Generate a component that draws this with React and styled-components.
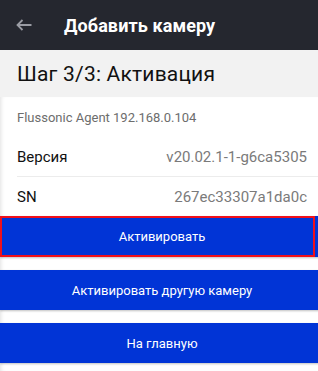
import React from 'react';
import styled, { createGlobalStyle } from 'styled-components';

const Global = createGlobalStyle`
    html, body {
        margin: 0;
        padding: 0;
        background: #ffffff;
        font-family: Roboto, "Noto Sans", Arial, sans-serif;
    }
    * { box-sizing: border-box; }
`
const Page = styled.div`
    width: 318px;
    height: 371px;
    overflow: hidden;
    display: flex;
    flex-direction: column;
    background: #fff;
`
const Header = styled.div`
    height: 50px;
    flex-shrink: 0;
    background: #25272f;
    display: flex;
    align-items: center;
    padding-left: 16px;
`
const BackButton = styled.svg`
    margin-right: 32px;
    flex-shrink: 0;
`
const Title = styled.div`
    color: #ffffff;
    font-size: 18px;
    font-weight: 700;
    letter-spacing: 0.1px;
`
const StepBar = styled.div`
    height: 47px;
    flex-shrink: 0;
    background: #f2f2f2;
    display: flex;
    align-items: center;
    padding-left: 17px;
    font-size: 21px;
    letter-spacing: 0.2px;
    color: #111;
`
const Content = styled.div`
    flex: 1;
    display: flex;
    flex-direction: column;
    box-shadow: inset 4px 0 4px -3px rgba(0, 0, 0, 0.12);
`
const Device = styled.div`
    height: 41px;
    display: flex;
    align-items: center;
    padding-left: 17px;
    font-size: 13px;
    color: #6d6d6d;
`
const Row = styled.div`
    height: ${props => props.h}px;
    display: flex;
    align-items: center;
    justify-content: space-between;
    margin-left: 17px;
    padding-right: 11px;
    border-bottom: ${props => props.divider ? '1px solid #ececec' : 'none'};
`
const Label = styled.span`
    font-size: 15px;
    color: #111;
`
const Value = styled.span`
    font-size: 15px;
    color: #7a7a7a;
`
const Buttons = styled.div`
    display: flex;
    flex-direction: column;
    gap: 13px;
`
const Button = styled.button`
    position: relative;
    width: 324px;
    height: ${props => props.h || 40}px;
    border: none;
    margin: 0;
    padding: 0;
    background: #0134d6;
    color: #fff;
    font-family: Roboto, "Noto Sans", Arial, sans-serif;
    font-size: 13px;
    font-weight: 400;
    box-shadow: 0 1px 2px rgba(0, 0, 0, 0.25);
    cursor: pointer;
`
const Highlight = styled.span`
    position: absolute;
    left: 0;
    top: 0;
    bottom: 0;
    right: 9px;
    border: 2px solid #f0101a;
    pointer-events: none;
`

export default function App() {
    return (
        <Page>
            <Global />
            <Header>
                <BackButton width="16" height="12" viewBox="0 0 16 12" fill="none" xmlns="http://www.w3.org/2000/svg">
                    <path d="M15.5 6H1.5M6.5 1L1.5 6L6.5 11" stroke="#9a9ca4" strokeWidth="1.8" />
                </BackButton>
                <Title>Добавить камеру</Title>
            </Header>
            <StepBar>Шаг 3/3: Активация</StepBar>
            <Content>
                <Device>Flussonic Agent 192.168.0.104</Device>
                <Row h={39} divider>
                    <Label>Версия</Label>
                    <Value>v20.02.1-1-g6ca5305</Value>
                </Row>
                <Row h={39}>
                    <Label>SN</Label>
                    <Value>267ec33307a1da0c</Value>
                </Row>
                <Buttons>
                    <Button h={41}>
                        Активировать
                        <Highlight />
                    </Button>
                    <Button>Активировать другую камеру</Button>
                    <Button>На главную</Button>
                </Buttons>
            </Content>
        </Page>
    )
}
